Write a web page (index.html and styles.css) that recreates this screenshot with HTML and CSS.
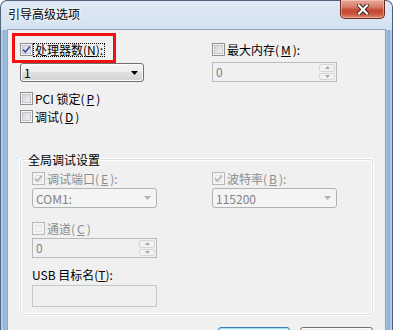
FILE: index.html
```html
<!DOCTYPE html>
<html lang="zh-CN">
<head>
    <meta charset="UTF-8">
    <meta name="viewport" content="width=device-width, initial-scale=1.0">
    <title>引导高级选项</title>
    <link rel="stylesheet" href="styles.css">
</head>
<body>
    <div class="window">
        <div class="titlebar">
            <span class="title">引导高级选项</span>
            <span class="close-btn">
                <svg width="12" height="11" viewBox="0 0 12 11">
                    <path d="M2 1.5 L10 9.5 M10 1.5 L2 9.5" stroke="#3a1a17" stroke-width="4" stroke-linecap="square"/>
                    <path d="M2 1.5 L10 9.5 M10 1.5 L2 9.5" stroke="#fff" stroke-width="2.2" stroke-linecap="square"/>
                </svg>
            </span>
        </div>

        <div class="client">
            <div class="top-row">
                <div class="col col-left">
                    <div class="highlight">
                        <label class="check">
                            <span class="box checked">
                                <svg width="11" height="11" viewBox="0 0 11 11"><path d="M2 5.5 L4.3 8 L9 2.5" fill="none" stroke="#3b54a0" stroke-width="1.7"/></svg>
                            </span>
                            <span class="focus">处理器数(<u>N</u>):</span>
                        </label>
                    </div>
                    <div class="combo">
                        <span>1</span>
                        <svg class="arrow" width="7" height="4" viewBox="0 0 7 4"><path d="M0 0 H7 L3.5 4 Z"/></svg>
                    </div>
                    <div class="options">
                        <label class="check"><span class="box"></span>PCI 锁定(<u>P</u>)</label>
                        <label class="check"><span class="box"></span>调试(<u>D</u>)</label>
                    </div>
                </div>

                <div class="col col-right">
                    <label class="check"><span class="box"></span>最大内存(<u>M</u>):</label>
                    <div class="spin disabled">
                        <span class="spin-value">0</span>
                        <span class="spin-btns">
                            <span class="spin-btn"><svg width="5" height="3" viewBox="0 0 5 3"><path d="M0 3 H5 L2.5 0 Z"/></svg></span>
                            <span class="spin-btn"><svg width="5" height="3" viewBox="0 0 5 3"><path d="M0 0 H5 L2.5 3 Z"/></svg></span>
                        </span>
                    </div>
                </div>
            </div>

            <fieldset class="group">
                <legend>全局调试设置</legend>
                <div class="group-row">
                    <div class="group-col">
                        <label class="check disabled">
                            <span class="box checked">
                                <svg width="11" height="11" viewBox="0 0 11 11"><path d="M2 5.5 L4.3 8 L9 2.5" fill="none" stroke="#b4b4b4" stroke-width="1.7"/></svg>
                            </span>调试端口(<u>E</u>):
                        </label>
                        <div class="combo disabled">
                            <span>COM1:</span>
                            <svg class="arrow" width="7" height="4" viewBox="0 0 7 4"><path d="M0 0 H7 L3.5 4 Z"/></svg>
                        </div>
                    </div>
                    <div class="group-col">
                        <label class="check disabled">
                            <span class="box checked">
                                <svg width="11" height="11" viewBox="0 0 11 11"><path d="M2 5.5 L4.3 8 L9 2.5" fill="none" stroke="#b4b4b4" stroke-width="1.7"/></svg>
                            </span>波特率(<u>B</u>):
                        </label>
                        <div class="combo disabled">
                            <span>115200</span>
                            <svg class="arrow" width="7" height="4" viewBox="0 0 7 4"><path d="M0 0 H7 L3.5 4 Z"/></svg>
                        </div>
                    </div>
                </div>

                <label class="check disabled channel"><span class="box"></span>通道(<u>C</u>)</label>
                <div class="spin disabled">
                    <span class="spin-value">0</span>
                    <span class="spin-btns">
                        <span class="spin-btn"><svg width="5" height="3" viewBox="0 0 5 3"><path d="M0 3 H5 L2.5 0 Z"/></svg></span>
                        <span class="spin-btn"><svg width="5" height="3" viewBox="0 0 5 3"><path d="M0 0 H5 L2.5 3 Z"/></svg></span>
                    </span>
                </div>

                <div class="usb-label">USB 目标名(<u>T</u>):</div>
                <div class="textbox disabled"></div>
            </fieldset>

            <div class="buttons">
                <span class="btn default">确定</span>
                <span class="btn">取消</span>
            </div>
        </div>
    </div>
</body>
</html>
```

FILE: styles.css
```css
* {
    box-sizing: border-box;
}
body {
    margin: 0;
    width: 393px;
    height: 330px;
    overflow: hidden;
    font-family: "Noto Sans CJK SC", "Noto Sans", sans-serif;
    font-size: 12px;
    color: #000;
    background: #fff;
}
u {
    text-decoration: underline;
}

/* window frame */
.window {
    width: 393px;
    height: 362px;
    display: flex;
    flex-direction: column;
    padding: 0 7px;
    border: 1px solid #51647b;
    border-bottom: none;
    border-radius: 7px 7px 0 0;
    background:
        linear-gradient(to right, #c4d7ec, #8fb0d7 3px, #a7c1e0 6px, #dce8f4 7px) left 0 top 29px / 7px 100% no-repeat,
        linear-gradient(to left, #c4d7ec, #8fb0d7 3px, #a7c1e0 6px, #dce8f4 7px) right 0 top 29px / 7px 100% no-repeat,
        linear-gradient(#dfe9f5, #d3e1f0 29px, #c1d5eb 30px, #c1d5eb);
}
.titlebar {
    height: 29px;
    flex: none;
    display: flex;
    justify-content: space-between;
    align-items: flex-start;
}
.title {
    padding-top: 5px;
    line-height: 15px;
    font-size: 12px;
    text-shadow: 0 0 6px #fff, 0 0 3px #fff;
}
.close-btn {
    width: 45px;
    height: 19px;
    margin: -1px 0 0 0;
    display: flex;
    align-items: center;
    justify-content: center;
    border: 1px solid #6b2a22;
    border-top: none;
    border-radius: 0 0 5px 5px;
    background: linear-gradient(#e9a99b, #d77a69 40%, #c44a35 55%, #c9513b 75%, #e0846a);
    box-shadow: inset 0 0 0 1px rgba(255, 220, 210, 0.45);
}

.client {
    flex: 1;
    display: flex;
    flex-direction: column;
    padding: 0 12px;
    background: #f0f0f0;
    box-shadow: 0 0 0 1px #8ba3bf;
}

/* top options */
.top-row {
    display: flex;
}
.col {
    display: flex;
    flex-direction: column;
    align-items: flex-start;
}
.col-left {
    width: 192px;
}
.col-right {
    padding-top: 13px;
}
.highlight {
    width: 104px;
    height: 30px;
    margin: 3px 0 0 -8px;
    padding: 7px 0 0 5px;
    border: 3px solid #ee1111;
}
.options {
    margin-top: 10px;
    display: flex;
    flex-direction: column;
    gap: 5px;
}

/* checkbox */
.check {
    display: flex;
    align-items: center;
    gap: 2px;
    height: 13px;
    line-height: 13px;
    white-space: nowrap;
}
.box {
    width: 13px;
    height: 13px;
    flex: none;
    display: flex;
    align-items: center;
    justify-content: center;
    border: 1px solid #8e8f8f;
    background: linear-gradient(135deg, #cdd0d4, #f5f5f5);
    box-shadow: inset 0 0 0 1px #f4f4f4, inset 0 0 0 2px #c4c7cb;
}
.check.disabled {
    color: #8d8d8d;
}
.check.disabled .box {
    border-color: #b9b9b9;
    background: #f3f3f3;
    box-shadow: inset 0 0 0 2px #f4f4f4, inset 0 0 0 3px #e2e2e2;
}
.focus {
    margin-left: -2px;
    padding: 0 1px;
    line-height: 12px;
    border: 1px dotted #000;
}

/* combo box */
.combo {
    width: 124px;
    height: 19px;
    display: flex;
    align-items: center;
    justify-content: space-between;
    padding: 0 5px 0 3px;
    line-height: 17px;
    border: 1px solid #707070;
    border-radius: 3px;
    background: linear-gradient(#f4f4f4, #ececec 50%, #e0e0e0 50%, #d3d3d3);
    box-shadow: inset 0 0 0 1px #fafafa;
}
.combo .arrow {
    fill: #000;
}
.combo.disabled {
    width: 125px;
    height: 20px;
    color: #838383;
    border-color: #afb3b6;
    background: #f4f4f4;
    box-shadow: none;
}
.combo.disabled .arrow {
    fill: #b3b3b3;
}

/* spin box */
.spin {
    width: 125px;
    height: 20px;
    margin-top: 6px;
    display: flex;
    justify-content: space-between;
    padding: 1px;
    border: 1px solid #b7babd;
    background: #f0f0f0;
    color: #838383;
}
.spin-value {
    padding-left: 2px;
    line-height: 16px;
}
.spin-btns {
    width: 16px;
    display: flex;
    flex-direction: column;
    gap: 1px;
}
.spin-btn {
    flex: 1;
    display: flex;
    align-items: center;
    justify-content: center;
    border: 1px solid #d6d6d6;
    border-radius: 2px;
    background: #f2f2f2;
    fill: #a9a9a9;
}

/* group box */
.group {
    min-width: 0;
    margin: 30px 0 0;
    padding: 0 11px 7px;
    border: 1px solid #d5dfe5;
    border-radius: 3px;
    box-shadow: 0 0 0 1px #fff, inset 0 0 0 1px #fff;
}
.group legend {
    margin-left: -5px;
    padding: 0 1px;
    line-height: 13px;
}
.group-row {
    display: flex;
    margin-top: 6px;
}
.group-col {
    display: flex;
    flex-direction: column;
    align-items: flex-start;
    gap: 3px;
}
.group-col:first-child {
    width: 180px;
}
.channel {
    margin-top: 14px;
}
.group .spin {
    margin-top: 3px;
}
.usb-label {
    margin-top: 10px;
    line-height: 13px;
}
.textbox {
    width: 125px;
    height: 22px;
    margin-top: 4px;
    border: 1px solid #c4c7ca;
    background: #f0f0f0;
}

/* buttons */
.buttons {
    display: flex;
    justify-content: flex-end;
    gap: 10px;
    margin-top: 12px;
}
.btn {
    width: 73px;
    height: 23px;
    display: flex;
    align-items: center;
    justify-content: center;
    border: 1px solid #707070;
    border-radius: 3px;
    background: linear-gradient(#f2f2f2, #ebebeb 50%, #dddddd 50%, #cfcfcf);
    box-shadow: inset 0 0 0 1px #fcfcfc;
}
.btn.default {
    width: 72px;
    border-color: #3c7fb1;
    background: linear-gradient(#e8f6fd, #d6f0fc 50%, #bfe6fb 50%, #a9dbf6);
    box-shadow: inset 0 0 0 1px #9ee3f8;
}
```
